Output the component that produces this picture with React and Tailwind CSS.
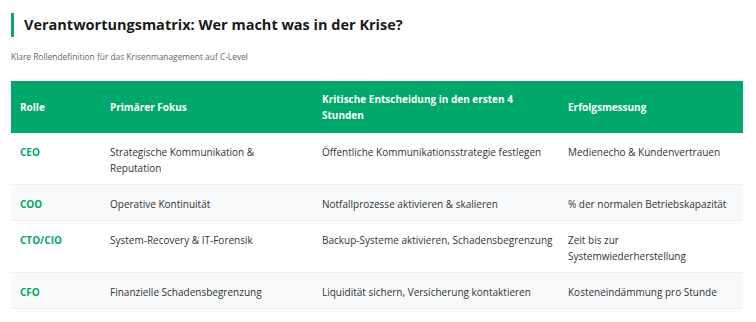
const rows = [
  {
    role: 'CEO',
    focus: 'Strategische Kommunikation & Reputation',
    decision: 'Öffentliche Kommunikationsstrategie festlegen',
    metric: 'Medienecho & Kundenvertrauen',
  },
  {
    role: 'COO',
    focus: 'Operative Kontinuität',
    decision: 'Notfallprozesse aktivieren & skalieren',
    metric: '% der normalen Betriebskapazität',
  },
  {
    role: 'CTO/CIO',
    focus: 'System-Recovery & IT-Forensik',
    decision: 'Backup-Systeme aktivieren, Schadensbegrenzung',
    metric: 'Zeit bis zur Systemwiederherstellung',
  },
  {
    role: 'CFO',
    focus: 'Finanzielle Schadensbegrenzung',
    decision: 'Liquidität sichern, Versicherung kontaktieren',
    metric: 'Kosteneindämmung pro Stunde',
  },
]

const App = () => {
  return (
    <div className="min-h-screen bg-white px-[11px] pt-[13px] font-['Open_Sans',sans-serif] text-[#333]">
      {/* Heading */}
      <h2 className="border-l-[3px] border-[#00a86b] pl-[10px] text-[14.5px] font-bold leading-[24px] text-[#1a1a1a]">
        Verantwortungsmatrix: Wer macht was in der Krise?
      </h2>
      <p className="mt-[14px] text-[8.4px] leading-[12px] text-[#666]">
        Klare Rollendefinition für das Krisenmanagement auf C-Level
      </p>

      <table className="mt-[18px] w-[732px] table-fixed border-collapse text-left text-[10px] leading-[16px]">
        <thead>
          <tr className="border-b border-[#0f9a63] bg-[#00a86b] text-white">
            <th className="w-[90px] px-[9px] pt-[10px] pb-[9px] align-middle font-bold">Rolle</th>
            <th className="w-[212px] pt-[10px] pb-[9px] pl-[9px] pr-[14px] align-middle font-bold">Primärer Fokus</th>
            <th className="w-[246px] pt-[10px] pb-[9px] pl-[9px] pr-[14px] align-middle font-bold">Kritische Entscheidung in den ersten 4 Stunden</th>
            <th className="w-[184px] pt-[10px] pb-[9px] pl-[9px] pr-[14px] align-middle font-bold">Erfolgsmessung</th>
          </tr>
        </thead>
        <tbody>
          {rows.map((row, i) => (
            <tr key={row.role} className={`border-b border-[#eceef0] ${i % 2 === 1 ? 'bg-[#f8f9fa]' : 'bg-white'}`}>
              <td className="px-[9px] pt-[11px] pb-[8px] align-top font-bold text-[#00a86b]">{row.role}</td>
              <td className="pt-[11px] pb-[8px] pl-[9px] pr-[14px] align-top">{row.focus}</td>
              <td className="pt-[11px] pb-[8px] pl-[9px] pr-0 align-top">{row.decision}</td>
              <td className="pt-[11px] pb-[8px] pl-[9px] pr-[14px] align-top">{row.metric}</td>
            </tr>
          ))}
        </tbody>
      </table>
    </div>
  )
}

export default App
